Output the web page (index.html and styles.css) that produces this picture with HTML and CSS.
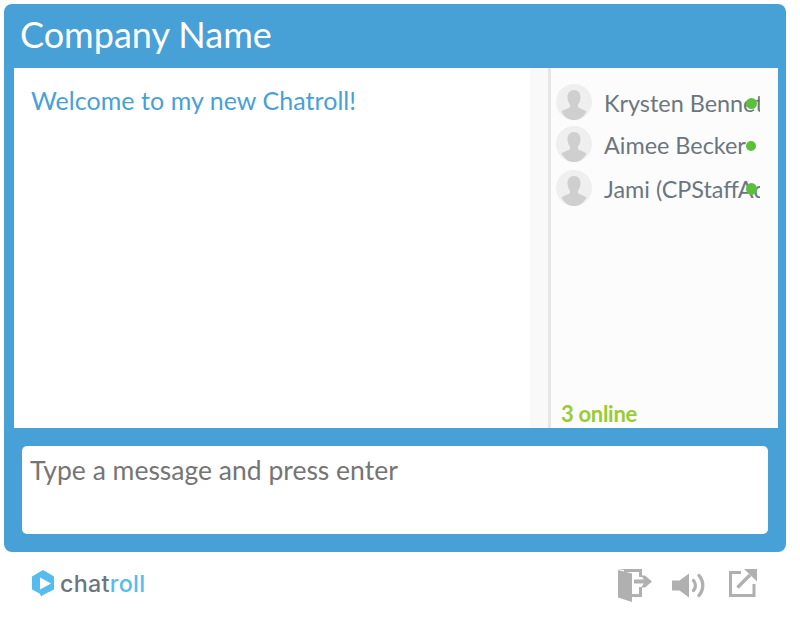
FILE: index.html
```html
<!DOCTYPE html>
<html lang="en">
<head>
<meta charset="utf-8">
<title>Chatroll</title>
<link rel="stylesheet" href="styles.css">
</head>
<body>
<main class="widget">
  <header class="title">Company Name</header>
  <section class="panes">
    <div class="messages">
      <p class="welcome">Welcome to my new Chatroll!</p>
    </div>
    <div class="stripe"></div>
    <aside class="people">
      <ul class="list">
        <li class="person">
          <svg class="avatar" viewBox="0 0 36 36"><circle cx="18" cy="18" r="18" fill="#efefef"/><path d="M18 6c-4 0-6.500 3-6.500 7 0 3 1 5.500 2.500 7.500v2.500c-1 1.500-6 2.500-8.500 4.500C8.500 33.500 13 36 18 36s9.500-2.500 12.500-8.500c-2.500-2-7.500-3-8.500-4.500v-2.500c1.500-2 2.500-4.500 2.500-7.500 0-4-2.500-7-6.500-7z" fill="#cfcfcf"/></svg>
          <span class="name">Krysten Bennett</span>
          <span class="dot dot-a"></span>
        </li>
        <li class="person">
          <svg class="avatar" viewBox="0 0 36 36"><circle cx="18" cy="18" r="18" fill="#efefef"/><path d="M18 6c-4 0-6.500 3-6.500 7 0 3 1 5.500 2.500 7.500v2.500c-1 1.500-6 2.500-8.500 4.500C8.500 33.500 13 36 18 36s9.500-2.500 12.500-8.500c-2.500-2-7.500-3-8.500-4.500v-2.500c1.500-2 2.500-4.500 2.500-7.500 0-4-2.500-7-6.500-7z" fill="#cfcfcf"/></svg>
          <span class="name">Aimee Becker</span>
          <span class="dot"></span>
        </li>
        <li class="person person-last">
          <svg class="avatar" viewBox="0 0 36 36"><circle cx="18" cy="18" r="18" fill="#efefef"/><path d="M18 6c-4 0-6.500 3-6.500 7 0 3 1 5.500 2.500 7.500v2.500c-1 1.500-6 2.500-8.500 4.500C8.500 33.500 13 36 18 36s9.500-2.500 12.500-8.500c-2.500-2-7.500-3-8.500-4.500v-2.500c1.500-2 2.500-4.500 2.500-7.500 0-4-2.500-7-6.500-7z" fill="#cfcfcf"/></svg>
          <span class="name">Jami (CPStaffAdmin)</span>
          <span class="dot dot-c"></span>
        </li>
      </ul>
      <div class="count">3 online</div>
    </aside>
  </section>
  <div class="composer">
    <div class="input">Type a message and press enter</div>
  </div>
</main>
<footer class="foot">
  <div class="brand">
    <svg class="logo" viewBox="0 0 22 27"><path d="M11 0 22 6.500V19.500L11 25 9.500 26.500 7.500 23.500 0 19.500V6.500z" fill="#56bcee"/><path d="M8 7.500 19 13.500 8 19.500z" fill="#fff"/></svg>
    <span class="word">chat<span class="word-roll">roll</span></span>
  </div>
  <div class="tools">
    <svg class="tool tool-exit" viewBox="0 0 34 33"><path d="M0 1 14 4.500V33L0 28.500z" fill="#b0b0b0"/><path d="M0 0H24V8H21V3H6V1z" fill="#b0b0b0"/><path d="M21 18H24V28H14V25H21z" fill="#b0b0b0"/><path d="M16 10.500H26L23 6.500H27L34 12.500 27 18.500H23L26 14.500H16z" fill="#b0b0b0"/></svg>
    <svg class="tool tool-sound" viewBox="0 0 33 25"><path d="M0 7.500H7.500L17 0.500V24.500L7.500 17.500H0z" fill="#b0b0b0"/><path d="M21.500 7.500c2.500 3 2.500 7 0 10M27 2.500c5 6 5 14 0 20" fill="none" stroke="#b0b0b0" stroke-width="3.400" stroke-linecap="round"/></svg>
    <svg class="tool tool-open" viewBox="0 0 28 28"><path d="M12 3.500H1.500V26.500H25V15" fill="none" stroke="#b0b0b0" stroke-width="3"/><path d="M8.500 18.500 21 6" fill="none" stroke="#b0b0b0" stroke-width="3.400"/><path d="M15 0H28V12.500z" fill="#b0b0b0"/></svg>
  </div>
</footer>
</body>
</html>
```

FILE: styles.css
```css
* {
  box-sizing: border-box;
}

html,
body {
  margin: 0;
  background: #fff;
}

body {
  width: 800px;
  height: 628px;
  padding: 4px 14px 0 4px;
  overflow: hidden;
  font-family: "Lato", "Liberation Sans", sans-serif;
}

.widget {
  width: 782px;
  height: 548px;
  background: #47a1d7;
  border-radius: 8px;
  display: flex;
  flex-direction: column;
}

.title {
  height: 64px;
  padding: 8px 0 0 16px;
  font-size: 36px;
  line-height: 44px;
  color: #fff;
}

.panes {
  height: 360px;
  margin: 0 8px 0 10px;
  display: flex;
  background: #fff;
}

.messages {
  width: 516px;
  padding: 16px 0 0 17px;
}

.welcome {
  margin: 0;
  font-size: 25px;
  line-height: 32px;
  letter-spacing: 0.05px;
  color: #47a1d7;
}

.stripe {
  width: 18px;
  background: #f9f9f9;
}

.people {
  flex: 1;
  background: #fcfcfc;
  border-left: 3px solid #e6e6e6;
  display: flex;
  flex-direction: column;
  justify-content: space-between;
}

.list {
  list-style: none;
  margin: 0;
  padding: 16px 0 0 5px;
  width: 209px;
  overflow: hidden;
}

.person {
  position: relative;
  display: flex;
  align-items: center;
  gap: 12px;
  height: 36px;
  margin-bottom: 6px;
}

.person-last {
  margin-top: 8px;
}

.avatar {
  width: 36px;
  height: 36px;
  flex: none;
}

.name {
  font-size: 23.400px;
  color: #6c7680;
  white-space: nowrap;
  overflow: hidden;
  width: 156px;
  flex: none;
  line-height: 38px;
  height: 38px;
  margin-top: 2px;
}

.dot {
  position: absolute;
  left: 190px;
  top: 15px;
  width: 10px;
  height: 10px;
  border-radius: 50%;
  background: #5bbf3a;
}

.dot-a {
  top: 14px;
  width: 11px;
  height: 11px;
}

.dot-c {
  width: 11px;
  height: 12px;
  top: 13px;
}

.count {
  padding: 0 0 1px 10px;
  font-size: 22px;
  line-height: 26px;
  font-weight: 700;
  color: #99cc33;
  letter-spacing: -0.3px;
}

.composer {
  flex: 1;
  padding: 18px;
}

.input {
  height: 88px;
  width: 746px;
  background: #fff;
  border-radius: 5px;
  padding: 7px 8px;
  font-size: 26.500px;
  line-height: 34px;
  color: #757575;
}

.foot {
  display: flex;
  justify-content: space-between;
  align-items: flex-start;
  padding: 18px 0 0 28px;
  width: 782px;
}

.brand {
  display: flex;
  align-items: center;
  gap: 6px;
}

.logo {
  width: 22px;
  height: 27px;
}

.word {
  font-family: "Inter", "Liberation Sans", sans-serif;
  font-weight: 500;
  font-size: 23.300px;
  line-height: 26px;
  color: #6d7680;
  letter-spacing: 0.3px;
}

.word-roll {
  color: #56bcee;
}

.tools {
  display: flex;
  align-items: flex-start;
  margin: -1px 29px 0 0;
}

.tool-exit {
  width: 34px;
  height: 33px;
  margin-right: 20px;
}

.tool-sound {
  width: 33px;
  height: 25px;
  margin: 4px 24px 0 0;
}

.tool-open {
  width: 28px;
  height: 28px;
}
```
